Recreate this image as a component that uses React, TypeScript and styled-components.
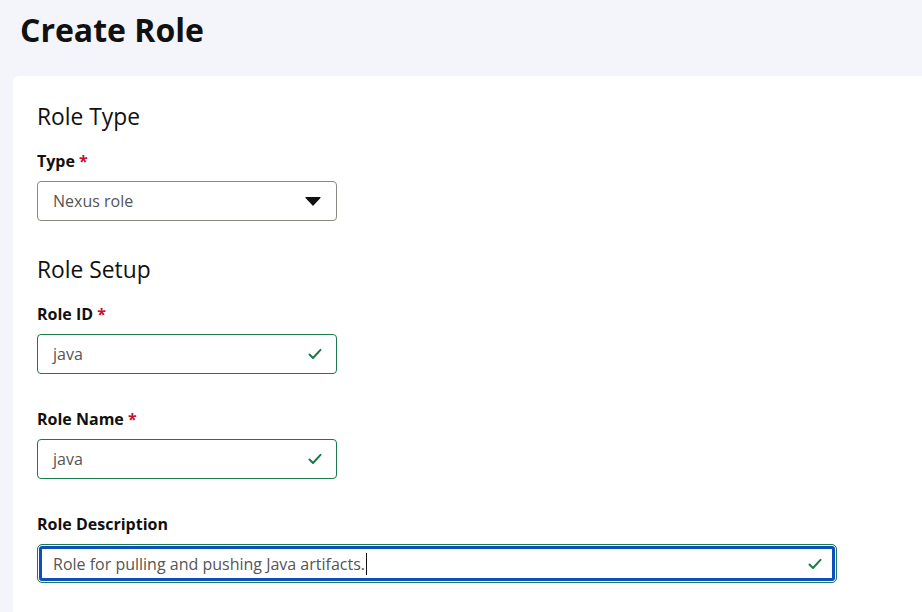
import { createGlobalStyle, styled } from "styled-components"

const GlobalStyle = createGlobalStyle`
  html, body {
    margin: 0;
    padding: 0;
    background: #f4f5fa;
    font-family: "Open Sans", "Noto Sans", sans-serif;
    color: #111;
  }
`

const CheckIcon = () => (
  <svg width="14" height="12" viewBox="0 0 14 12" fill="none">
    <path d="M1.5 6.5 L5 10 L12.5 1.8" stroke="#1b7a4b" strokeWidth="2" strokeLinecap="round" strokeLinejoin="round" />
  </svg>
)

const CaretIcon = () => (
  <svg width="16" height="10" viewBox="0 0 16 10">
    <path d="M1 1.5 H15 L8 9 Z" fill="#111" stroke="#111" strokeWidth="1.2" strokeLinejoin="round" />
  </svg>
)

type FieldProps = {
  label: string
  value: string
  required?: boolean
  focused?: boolean
  wide?: boolean
}

const TextField = ({ label, value, required, focused, wide }: FieldProps) => (
  <Field>
    <Label>
      {label}
      {required && <Star> *</Star>}
    </Label>
    <InputBox $focused={focused} $wide={wide}>
      <InputText>
        {value}
        {focused && <Cursor />}
      </InputText>
      <CheckIcon />
    </InputBox>
  </Field>
)

export default function App() {
  return (
    <Page>
      <GlobalStyle />
      <Title>Create Role</Title>
      <Card>
        <SectionTitle>Role Type</SectionTitle>
        <Field>
          <Label>
            Type<Star> *</Star>
          </Label>
          <SelectBox>
            <SelectText>Nexus role</SelectText>
            <CaretIcon />
          </SelectBox>
        </Field>
        <SectionTitle>Role Setup</SectionTitle>
        <TextField label="Role ID" value="java" required />
        <TextField label="Role Name" value="java" required />
        <TextField label="Role Description" value="Role for pulling and pushing Java artifacts." focused wide />
      </Card>
    </Page>
  )
}

const Page = styled.div`
  height: 612px;
  overflow: hidden;
  display: flex;
  flex-direction: column;
`

const Title = styled.h1`
  margin: 0;
  padding: 8px 20px 0;
  height: 76px;
  flex-shrink: 0;
  box-sizing: border-box;
  font-size: 32px;
  font-weight: 700;
  color: #111;
  line-height: 44px;
`

const Card = styled.div`
  flex: 1;
  margin-left: 13px;
  background: #fff;
  border-top-left-radius: 6px;
  padding: 26px 24px 0;
  display: flex;
  flex-direction: column;
`

const SectionTitle = styled.h2`
  margin: 0 0 18px;
  font-size: 22.8px;
  font-weight: 400;
  line-height: 30px;
  color: #111;
`

const Field = styled.div`
  display: flex;
  flex-direction: column;
  margin-bottom: 34px;
`

const Label = styled.label`
  font-size: 16px;
  font-weight: 700;
  line-height: 22px;
  margin-bottom: 9px;
  color: #111;
`

const Star = styled.span`
  color: #c8102e;
`

const SelectBox = styled.div`
  width: 300px;
  height: 40px;
  box-sizing: border-box;
  border: 1px solid #8a8a80;
  border-radius: 4px;
  display: flex;
  align-items: center;
  justify-content: space-between;
  padding: 0 15px 0 15px;
`

const SelectText = styled.span`
  font-size: 16px;
  color: #555;
`

const InputBox = styled.div<{ $focused?: boolean; $wide?: boolean }>`
  width: ${(p) => (p.$wide ? "800px" : "300px")};
  height: ${(p) => (p.$focused ? "39px" : "40px")};
  box-sizing: border-box;
  border: 1px solid #1b7a4b;
  border-radius: 4px;
  display: flex;
  align-items: center;
  justify-content: space-between;
  padding: 0 14px 0 15px;
  ${(p) =>
    p.$focused &&
    `
    box-shadow: inset 0 0 0 1px #fff, inset 0 0 0 4px #0d4fc2;
    border-radius: 5px;
  `}
`

const InputText = styled.span`
  font-size: 16px;
  color: #555;
  display: flex;
  align-items: center;
`

const Cursor = styled.span`
  display: inline-block;
  width: 1px;
  height: 22px;
  background: #111;
  margin-left: 1px;
`
